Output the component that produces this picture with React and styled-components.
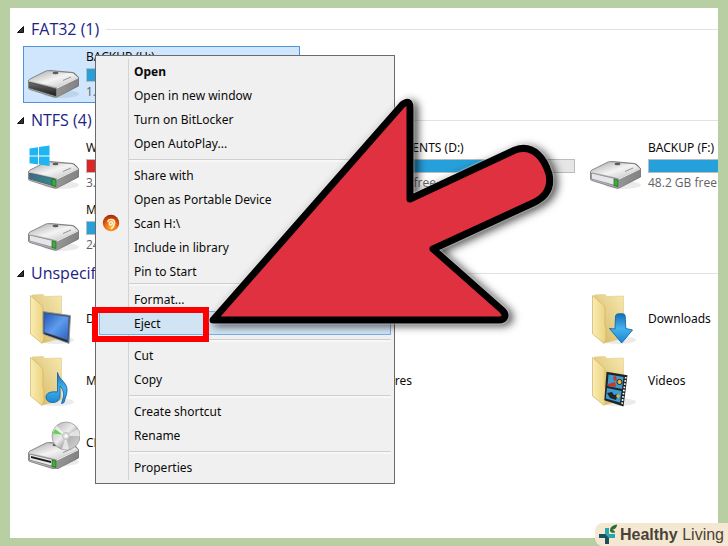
import React, {PureComponent, Fragment} from "react";
import styled, {createGlobalStyle} from "styled-components";

const colors = {
    frame: '#b8cfa3',
    link: '#1e2287',
    text: '#0a0a0a',
    grey_text: '#5f6166',
    bar: '#26a0da',
    bar_full: '#da2626',
    menu: '#f0f0f0',
    line: '#d3d3d3',
    arrow: '#e03140'
};

const groups = [
    {
        id: 'fat',
        title: 'FAT32 (1)',
        items: [
            {name: 'BACKUP (H:)', icon: 'open', used: 80, info: '1.21 GB free of 7.45 GB', selected: true}
        ]
    },
    {
        id: 'ntfs',
        title: 'NTFS (4)',
        items: [
            {name: 'WINDOWS (C:)', icon: 'windows', used: 95, full: true, info: '3.74 GB free of 97.6 GB'},
            {name: 'DOCUMENTS (D:)', icon: 'plain', used: 75, info: '73.5 GB free of 292 GB'},
            {name: 'BACKUP (F:)', icon: 'plain', used: 84, info: '48.2 GB free of 310 GB'},
            {name: 'MEDIA (G:)', icon: 'plain', used: 70, info: '24.6 GB free of 97.6 GB'}
        ]
    },
    {
        id: 'other',
        title: 'Unspecified (7)',
        items: [
            {name: 'Desktop', icon: 'desktop'},
            {name: 'Documents', icon: 'folder'},
            {name: 'Downloads', icon: 'downloads'},
            {name: 'Music', icon: 'music'},
            {name: 'Pictures', icon: 'folder'},
            {name: 'Videos', icon: 'videos'},
            {name: 'CD Drive (E:)', icon: 'disc'}
        ]
    }
];

const menuSections = [
    {items: ['Open', 'Open in new window', 'Turn on BitLocker', 'Open AutoPlay...']},
    {items: ['Share with', 'Open as Portable Device', 'Scan H:\\', 'Include in library', 'Pin to Start'], tight: true},
    {items: ['Format...', 'Eject']},
    {items: ['Cut', 'Copy']},
    {items: ['Create shortcut', 'Rename']},
    {items: ['Properties']}
];

// shared gradients, every icon refers to them by id
const IconDefs = () => (
    <Defs aria-hidden="true">
        <defs>
            <linearGradient id="metalTop" x1="0" y1="0" x2="1" y2="1">
                <stop offset="0" stopColor="#a9a9a9"/>
                <stop offset="0.5" stopColor="#f4f4f4"/>
                <stop offset="1" stopColor="#bdbdbd"/>
            </linearGradient>
            <linearGradient id="metalSide" x1="0" y1="0" x2="1" y2="0">
                <stop offset="0" stopColor="#d8d8d8"/>
                <stop offset="1" stopColor="#777"/>
            </linearGradient>
            <linearGradient id="darkFace" x1="0" y1="0" x2="0" y2="1">
                <stop offset="0" stopColor="#6d6d6d"/>
                <stop offset="1" stopColor="#1c1c1c"/>
            </linearGradient>
            <linearGradient id="tealFace" x1="0" y1="0" x2="1" y2="0">
                <stop offset="0" stopColor="#3d6a86"/>
                <stop offset="1" stopColor="#2f8f8c"/>
            </linearGradient>
            <linearGradient id="flap" x1="0" y1="0" x2="1" y2="0">
                <stop offset="0" stopColor="#f9ecb4"/>
                <stop offset="1" stopColor="#ecd27c"/>
            </linearGradient>
            <linearGradient id="back" x1="1" y1="0" x2="0" y2="1">
                <stop offset="0" stopColor="#f6e8ae"/>
                <stop offset="1" stopColor="#d3b562"/>
            </linearGradient>
            <linearGradient id="blue" x1="0" y1="0" x2="1" y2="1">
                <stop offset="0" stopColor="#2457b8"/>
                <stop offset="0.5" stopColor="#5f9cec"/>
                <stop offset="1" stopColor="#2b62c4"/>
            </linearGradient>
            <linearGradient id="sky" x1="0" y1="0" x2="0" y2="1">
                <stop offset="0" stopColor="#1571b8"/>
                <stop offset="0.5" stopColor="#43b2ee"/>
                <stop offset="1" stopColor="#1a86d2"/>
            </linearGradient>
            <linearGradient id="cd" x1="0" y1="0" x2="1" y2="1">
                <stop offset="0" stopColor="#a9a9a9"/>
                <stop offset="0.45" stopColor="#ececec"/>
                <stop offset="0.6" stopColor="#b4b4b4"/>
                <stop offset="1" stopColor="#dadada"/>
            </linearGradient>
            <radialGradient id="scan" cx="0.5" cy="0.75" r="0.7">
                <stop offset="0" stopColor="#ffb52e"/>
                <stop offset="0.5" stopColor="#ee6a12"/>
                <stop offset="1" stopColor="#a82a0c"/>
            </radialGradient>
        </defs>
    </Defs>
);

class DriveIcon extends PureComponent {
    renderFace = () => {
        switch (this.props.kind) {
            case 'open' :
                return <path d="M1.5 33L28 40V47L1.5 39Z" fill="url(#darkFace)" stroke="#333" strokeWidth="0.6"/>;
            case 'windows' :
                return <path d="M1.5 33L27 39V46L1.5 39Z" fill="url(#tealFace)" stroke="#4c5a63" strokeWidth="0.8"/>;
            case 'disc' :
                return (
                    <Fragment>
                        <path d="M1.5 33L27 39V46L1.5 39Z" fill="#e9e9e9" stroke="#777" strokeWidth="0.8"/>
                        <path d="M3 35L23 40V42L3 37Z" fill="#1d1d1d"/>
                    </Fragment>
                );
            default :
                return <path d="M1.5 33L27 39V46L1.5 39Z" fill="#e4e6ea" stroke="#858585" strokeWidth="0.8"/>;
        }
    };

    render() {
        const {kind} = this.props;
        return (
            <IconSvg viewBox="0 0 52 52" aria-hidden="true">
                <ellipse cx="33" cy="45" rx="18" ry="4" fill="#000" opacity="0.08"/>
                <g transform={kind === 'disc' ? 'translate(0 4)' : undefined}>
                    <path
                        d="M0.5 32Q0.5 31 2 30L18 22Q20 21.4 23 21.6L44 23.4Q46 23.6 47 24.6L50.5 28.5V37L29 48Q27.5 48.5 26 48L2 40.5Q0.5 40 0.5 39Z"
                        fill="url(#metalSide)" stroke="#6e6e6e" strokeWidth="0.8"
                    />
                    <path d="M1.5 31.5L19 22.2L45 24.2L50 28.5L29 38.5Z" fill="url(#metalTop)"/>
                    <path d="M29 39.5L50 29.5V36.5L29 47.5Z" fill="#8d8d8d" opacity="0.55"/>
                    <path d="M29 39L50 29" stroke="#fafafa" strokeWidth="0.9"/>
                    <path d="M35 31.5L43 28" stroke="#8a8a8a" strokeWidth="0.9"/>
                    <ellipse cx="27.5" cy="24" rx="3" ry="1.2" fill="#5b5b5b"/>
                    {this.renderFace()}
                    {kind !== 'open' && <path d="M24 39L28 40V46.5L24 45.5Z" fill="#3fae3a" stroke="#1d6420" strokeWidth="0.7"/>}
                </g>
                {kind === 'windows' && (
                    <path d="M1.5 8.5L10 7.2V15.5H1.5ZM11 7L21.5 5.5V15.5H11ZM1.5 16.5H10V24.5L1.5 23.2ZM11 16.5H21.5V26L11 24.6Z" fill="#1fb4f2"/>
                )}
                {kind === 'disc' && (
                    <Fragment>
                        <circle cx="38" cy="19" r="14" fill="url(#cd)" stroke="#8f8f8f" strokeWidth="0.7"/>
                        <path d="M38 19L25 14A14 14 0 0 1 29 8.5Z" fill="#fff" opacity="0.6"/>
                        <path d="M34.5 17.5L25 16.5L27 12Z" fill="#5fd64b"/>
                        <path d="M38 19L50 12A14 14 0 0 1 52 19Z" fill="#fff" opacity="0.6"/>
                        <path d="M38 19L34 32A14 14 0 0 0 41 32.5Z" fill="#fff" opacity="0.6"/>
                        <circle cx="38" cy="19" r="3.5" fill="#dedede" stroke="#aaa" strokeWidth="0.6"/>
                        <circle cx="38" cy="19" r="1.5" fill="#fff"/>
                    </Fragment>
                )}
            </IconSvg>
        );
    }
}

class FolderIcon extends PureComponent {
    renderContent = () => {
        switch (this.props.kind) {
            case 'desktop' :
                return (
                    <Fragment>
                        <path d="M15 18.5L42.5 22.5L41 50.5L15 41Z" fill="#4a5568" stroke="#8d99ab" strokeWidth="0.9"/>
                        <path d="M16.5 20.5L40.5 24L39.5 46.5L16.5 39Z" fill="url(#blue)"/>
                        <path d="M16.5 40L39.5 47.5V49L16.5 41Z" fill="#1a2330"/>
                    </Fragment>
                );
            case 'music' :
                return (
                    <path
                        d="M29.5 17.5C31 25 39 27 39 35C39 40 37 43 36 47.5L33.5 48.5C36 42 36.5 35 32 31L32 41C32 45 29 47.5 25 47.5C20.5 47.5 18 45 18 42C18 38.5 22 36 29.5 37Z"
                        fill="url(#sky)" stroke="#1267ae" strokeWidth="0.9" strokeLinejoin="round"
                    />
                );
            case 'downloads' :
                return (
                    <path
                        d="M25.5 23Q26 21 28 20.8L33 20.8Q35 21 35.2 23L35.8 35.5L42.5 37L31.7 50L19.5 35.5L25 36Z"
                        fill="url(#sky)" stroke="#1267ae" strokeWidth="0.9" strokeLinejoin="round"
                    />
                );
            case 'videos' :
                return (
                    <Fragment>
                        <path d="M16.5 16.7L37.5 20.3L33.5 51.5L14.3 45.3Z" fill="#20242a"/>
                        <path d="M18.5 19.5L33.5 22L32 34L17.5 31Z" fill="#3a9fd0"/>
                        <path d="M17 33L31.5 36L30 47.5L15.8 43.5Z" fill="#3a9fd0"/>
                        <path d="M23 22L26 20.8L27 25L24 26ZM18 29L25 27L26 32L18 31Z" fill="#c63a2c"/>
                        <circle cx="29.5" cy="27" r="2.6" fill="#e6b440" stroke="#20242a"/>
                        <path d="M17 38L22 37L24 40L28 39L26 45L20 43Z" fill="#20242a"/>
                        <circle cx="28" cy="41" r="1.8" fill="#e6b440"/>
                        <path d="M35.8 22L31.9 50" stroke="#fff" strokeWidth="1.7" strokeDasharray="1.6 1.6"/>
                    </Fragment>
                );
            default :
                return null;
        }
    };

    render() {
        return (
            <IconSvg viewBox="0 0 52 52" aria-hidden="true">
                <ellipse cx="28" cy="47" rx="18" ry="4" fill="#000" opacity="0.08"/>
                <path d="M4 2L15 1.5L17 3.5L33.5 3V45L15 50Z" fill="url(#back)" stroke="#e0ca83" strokeWidth="0.6"/>
                <path d="M2.5 2.5L13.5 12Q15 13.5 15 16V33L16 34V46L14 50.5L2.5 41Z" fill="url(#flap)" stroke="#cfb266" strokeWidth="0.7"/>
                {this.renderContent()}
            </IconSvg>
        );
    }
}

const driveKinds = ['open', 'windows', 'plain', 'disc'];

class Explorer extends PureComponent {

    renderItem = (item) => {
        const Icon = driveKinds.includes(item.icon) ? DriveIcon : FolderIcon;
        return (
            <Tile key={item.name} className={item.selected ? 'selected' : ''}>
                <Icon kind={item.icon}/>
                <TileText>
                    <TileName>{item.name}</TileName>
                    {item.info && (
                        <Fragment>
                            <Bar>
                                <BarFill $full={item.full} style={{width: `${item.used}%`}}/>
                            </Bar>
                            <TileInfo>{item.info}</TileInfo>
                        </Fragment>
                    )}
                </TileText>
            </Tile>
        );
    };

    render() {
        return (
            <Panel>
                {groups.map((group) => (
                    <section key={group.id}>
                        <GroupHeader>
                            <svg width="7" height="7" viewBox="0 0 7 7" aria-hidden="true">
                                <path d="M6.5 0.5V6.5H0.5Z" fill="#333" stroke="#111"/>
                            </svg>
                            <GroupTitle>{group.title}</GroupTitle>
                            <GroupLine/>
                        </GroupHeader>
                        <Tiles>{group.items.map(this.renderItem)}</Tiles>
                    </section>
                ))}
            </Panel>
        );
    }
}

class ContextMenu extends PureComponent {

    state = {
        active: 'Eject'
    };

    handlerFocus = (item) => {
        this.setState({active: item});
    };

    renderItem = (item) => (
        <MenuItem
            key={item}
            type="button"
            role="menuitem"
            className={this.state.active === item ? 'active' : ''}
            $bold={item === 'Open'}
            onFocus={() => this.handlerFocus(item)}
        >
            <MenuIcon>
                {item.startsWith('Scan') && (
                    <svg width="18" height="18" viewBox="0 0 18 18" aria-hidden="true">
                        <circle cx="9" cy="9" r="8.2" fill="url(#scan)"/>
                        <path d="M6 7.5C6.5 5 12 4.5 12.5 8C12.8 11 11 13 9.5 14.5M9.8 7.5C7.5 7.5 6.5 10.5 8.5 11C10 11.2 10.5 9.5 10.2 8" fill="none" stroke="#fff0c8" strokeWidth="1.7" strokeLinecap="round"/>
                    </svg>
                )}
            </MenuIcon>
            {item}
        </MenuItem>
    );

    render() {
        return (
            <Menu role="menu">
                {menuSections.map((section, index) => (
                    <Fragment key={index}>
                        {section.items.map(this.renderItem)}
                        {index < menuSections.length - 1 && <Separator $tight={section.tight}/>}
                    </Fragment>
                ))}
            </Menu>
        );
    }
}

const Pointer = () => (
    <PointerSvg viewBox="200 84 370 250" aria-hidden="true">
        <path
            d="M213 320L402 105Q410 98 410 108V199L515 150C534 143 545 160 549 174C552 188 546 197 533 203L433 249L502 310C508 316 504 320 499 320Z"
            fill={colors.arrow} stroke="#000" strokeWidth="7" strokeLinejoin="round"
        />
    </PointerSvg>
);

const Watermark = () => (
    <Badge>
        <svg width="20" height="21" viewBox="0 0 20 21" aria-hidden="true">
            <path d="M7 4H11V10H17V14H11V20H7V14H1V10H7Z" fill="#2aa7a9"/>
            <path d="M1 10H7L11 14V20H7V14H1Z" fill="#1d4f5c"/>
            <path d="M12 7C12 3 15 1 19 0.5C19 3 18 5 14 6C16 6 17 7 17 8.5C15 9 13 9 12 7Z" fill="#2c6b35"/>
        </svg>
        <BadgeText><b>Healthy</b> Living</BadgeText>
    </Badge>
);

const App = () => (
    <Fragment>
        <GlobalStyle/>
        <IconDefs/>
        <Frame>
            <Explorer/>
            <ContextMenu/>
            <Marker/>
            <Pointer/>
            <Watermark/>
        </Frame>
    </Fragment>
);

export default App;


const GlobalStyle = createGlobalStyle`
    * {
        box-sizing: border-box;
    }
    body {
        margin: 0;
        font-family: "Noto Sans", "Open Sans", sans-serif;
        font-size: 12px;
        color: ${colors.text};
    }
`;

const Defs = styled.svg`
    position: absolute;
    width: 0;
    height: 0;
`;

const Frame = styled.div`
    position: relative;
    display: flex;
    min-height: 100vh;
    padding: 8px 10px;
    overflow: hidden;
    background-color: ${colors.frame};
`;

const Panel = styled.main`
    flex: 1;
    min-width: 0;
    padding: 4px 0 0 7px;
    overflow: hidden;
    background-color: #fff;
`;

const GroupHeader = styled.header`
    display: flex;
    align-items: center;
    gap: 7px;
    height: 34px;
`;

const GroupTitle = styled.h2`
    margin: 0;
    font-family: "Open Sans", sans-serif;
    font-size: 16px;
    font-weight: 400;
    line-height: 20px;
    color: ${colors.link};
`;

const GroupLine = styled.div`
    flex: 1;
    height: 1px;
    background-color: #e2e2e2;
`;

const Tiles = styled.div`
    display: grid;
    grid-template-columns: repeat(3, 277px);
    gap: 5px 4px;
    padding-left: 6px;
`;

const Tile = styled.article`
    display: flex;
    align-items: center;
    gap: 6px;
    height: 57px;
    padding: 0 5px 0 4px;
    border: 1px solid transparent;

    &.selected {
        border-color: #4f94d8;
        background-color: #cfe6fd;
    }
`;

const IconSvg = styled.svg`
    flex: none;
    width: 52px;
    height: 52px;
`;

const TileText = styled.div`
    flex: 1;
    min-width: 0;
    line-height: 18px;
    white-space: nowrap;
`;

const TileName = styled.div``;

const Bar = styled.div`
    height: 14px;
    margin: 2px 0 1px;
    border: 1px solid #bcbcbc;
    background-color: #e6e6e6;
`;

const BarFill = styled.div`
    height: 100%;
    background-color: ${({$full}) => $full ? colors.bar_full : colors.bar};
`;

const TileInfo = styled.div`
    font-family: "Open Sans", sans-serif;
    color: ${colors.grey_text};
`;

const Menu = styled.div`
    position: absolute;
    top: 55px;
    left: 95px;
    display: flex;
    flex-direction: column;
    width: 300px;
    padding: 3px 3px 4px;
    border: 1px solid #6a6a6a;
    background: linear-gradient(${colors.line}, ${colors.line}) 32px 3px / 1px calc(100% - 6px) no-repeat ${colors.menu};
`;

const MenuItem = styled.button`
    display: flex;
    align-items: center;
    height: 24px;
    padding: 0;
    border: 1px solid transparent;
    background: none;
    font: inherit;
    font-weight: ${({$bold}) => $bold ? 700 : 400};
    color: inherit;
    text-align: left;

    &.active {
        border-color: #78b0ea;
        background-color: #d1e4f4;
    }
`;

const MenuIcon = styled.span`
    display: flex;
    width: 34px;
    padding-left: 2px;
`;

const Separator = styled.div`
    height: ${({$tight}) => $tight ? 4 : 8}px;
    margin-left: 30px;
    padding-top: ${({$tight}) => $tight ? 0 : 4}px;

    &::before {
        content: "";
        display: block;
        height: 2px;
        border-top: 1px solid #cfcfcf;
        background-color: #f7f7f7;
    }
`;

const Marker = styled.div`
    position: absolute;
    top: 307px;
    left: 92px;
    width: 117px;
    height: 35px;
    border: 6px solid #ff0000;
    pointer-events: none;
`;

const PointerSvg = styled.svg`
    position: absolute;
    top: 84px;
    left: 200px;
    width: 370px;
    height: 250px;
    overflow: visible;
    pointer-events: none;
    filter: drop-shadow(0 0 1px #fff) drop-shadow(4px 2px 4px rgba(0, 0, 0, 0.7));
`;

const Badge = styled.footer`
    position: absolute;
    right: 0;
    bottom: 0;
    display: flex;
    align-items: center;
    gap: 2px;
    height: 23px;
    padding: 0 4px 0 3px;
    border-radius: 8px 0 0 8px;
    background-color: #f5e8d2;
`;

const BadgeText = styled.span`
    font-family: "Liberation Sans", Arial, sans-serif;
    font-size: 16px;
    line-height: 20px;
    color: #4a4338;
`;
